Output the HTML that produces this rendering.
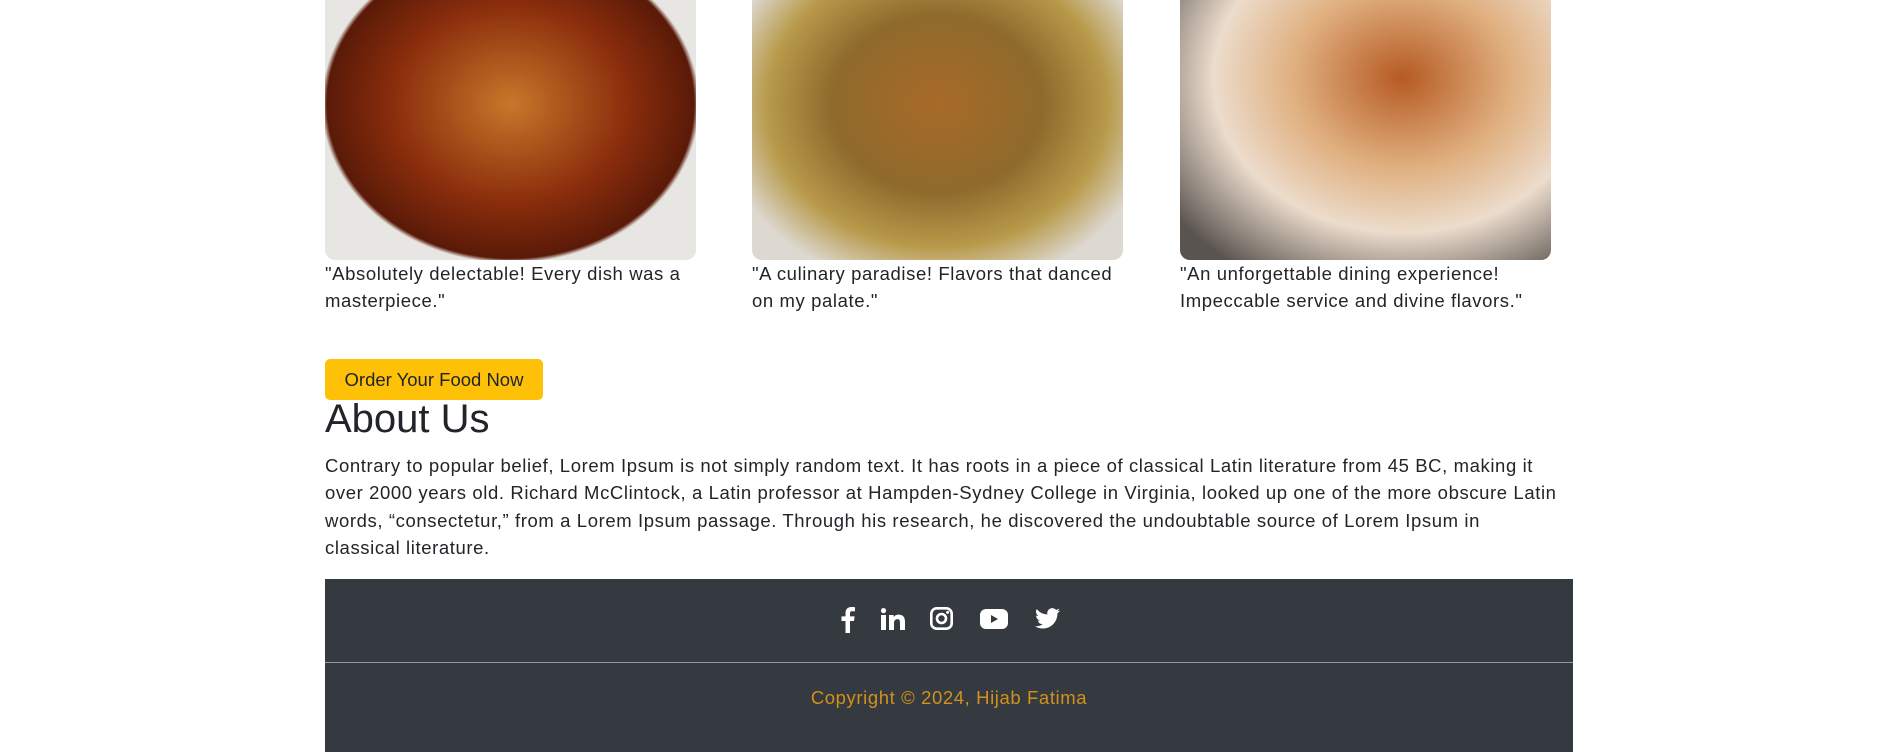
<!DOCTYPE html>
<html><head><meta charset="utf-8"><style>
body{margin:0;width:1893px;height:752px;background:#fff;font-family:"Liberation Sans",sans-serif;color:#212529;position:relative;overflow:hidden}
.img{position:absolute;top:0;height:260px;width:371px;border-radius:0 0 10px 10px}
.cap{position:absolute;top:260px;width:420px;font-size:18.5px;line-height:27px;letter-spacing:0.6px;white-space:nowrap}
.btn{position:absolute;left:325px;top:359px;width:218px;height:41px;background:#ffc107;border-radius:5px;font-size:18.5px;line-height:41px;text-align:center;color:#212529}
h2{position:absolute;left:325px;top:397px;margin:0;font-size:40px;font-weight:500}
p{position:absolute;left:325px;top:452px;width:1300px;margin:0;font-size:18.5px;line-height:27.3px;letter-spacing:0.6px;white-space:nowrap}
.foot{position:absolute;left:325px;top:579px;width:1248px;height:173px;background:#343a40}
.line{position:absolute;left:0;top:83px;width:100%;height:1px;background:#999}
.copy{position:absolute;top:108px;width:100%;text-align:center;color:#d4901c;font-size:18.5px;letter-spacing:0.6px}
svg{position:absolute;fill:#fff}
</style></head><body>
<div class="img" style="left:325px;background:radial-gradient(ellipse at 50% 40%,#c8772a 0%,#8a2d0c 45%,#5a1a08 70%,#e8e6e2 72%)"></div>
<div class="img" style="left:752px;background:radial-gradient(ellipse at 50% 40%,#a86a28 0%,#8e6a2c 40%,#b89a4a 65%,#ddd8d0 85%)"></div>
<div class="img" style="left:1180px;background:radial-gradient(ellipse at 60% 30%,#b65a22 0%,#e0b080 35%,#ecdccc 60%,#5a5450 90%)"></div>
<div class="cap" style="left:325px">"Absolutely delectable! Every dish was a<br>masterpiece."</div>
<div class="cap" style="left:752px">"A culinary paradise! Flavors that danced<br>on my palate."</div>
<div class="cap" style="left:1180px">"An unforgettable dining experience!<br>Impeccable service and divine flavors."</div>
<div class="btn">Order Your Food Now</div>
<h2>About Us</h2>
<p>Contrary to popular belief, Lorem Ipsum is not simply random text. It has roots in a piece of classical Latin literature from 45 BC, making it<br>over 2000 years old. Richard McClintock, a Latin professor at Hampden-Sydney College in Virginia, looked up one of the more obscure Latin<br>words, “consectetur,” from a Lorem Ipsum passage. Through his research, he discovered the undoubtable source of Lorem Ipsum in<br>classical literature.</p>
<div class="foot">
<svg style="left:515px;top:27px" width="15" height="27" viewBox="0 0 15 27"><path d="M10 27V15h4l.6-4.6H10V7.5c0-1.3.4-2.2 2.3-2.2H15V1.2C14.5 1.1 13 1 11.4 1 8 1 5.5 3 5.5 6.9v3.5H1.5V15h4v12z"/></svg>
<svg style="left:556px;top:29px" width="24" height="22" viewBox="0 0 24 22"><rect x="0" y="7" width="5" height="15"/><circle cx="2.5" cy="2.6" r="2.6"/><path d="M8 7h4.7v2.2C13.5 7.8 15 6.6 17.5 6.6 22 6.6 24 9 24 14v8h-5v-7.3c0-2-.5-3.6-2.5-3.6s-3.5 1.4-3.5 3.7V22H8z"/></svg>
<svg style="left:605px;top:28px" width="23" height="23" viewBox="0 0 23 23"><rect x="1.3" y="1.3" width="20.4" height="20.4" rx="5.5" fill="none" stroke="#fff" stroke-width="2.6"/><circle cx="11.5" cy="11.5" r="4.5" fill="none" stroke="#fff" stroke-width="2.6"/><circle cx="17.6" cy="5.4" r="1.5"/></svg>
<svg style="left:655px;top:30px" width="28" height="20" viewBox="0 0 28 20"><rect width="28" height="20" rx="6"/><path d="M11 6v8l7-4z" fill="#343a40"/></svg>
<svg style="left:710px;top:29px" width="25" height="21" viewBox="0 0 24 20"><path d="M24 2.4c-.9.4-1.8.6-2.8.8 1-.6 1.8-1.600 2.2-2.7-1 .6-2 1-3.1 1.2A4.9 4.9 0 0 0 11.9 6.2 14 14 0 0 1 1.7 1 4.9 4.9 0 0 0 3.2 7.6 4.9 4.9 0 0 1 1 7v.1a4.9 4.9 0 0 0 3.9 4.8 4.9 4.9 0 0 1-2.2.1 4.9 4.9 0 0 0 4.6 3.4A9.9 9.9 0 0 1 0 17.4 14 14 0 0 0 7.5 19.6c9 0 14-7.5 14-14v-.6c1-.7 1.8-1.600 2.5-2.600z"/></svg>
<div class="line"></div>
<div class="copy">Copyright © 2024, Hijab Fatima</div>
</div>
</body></html>
